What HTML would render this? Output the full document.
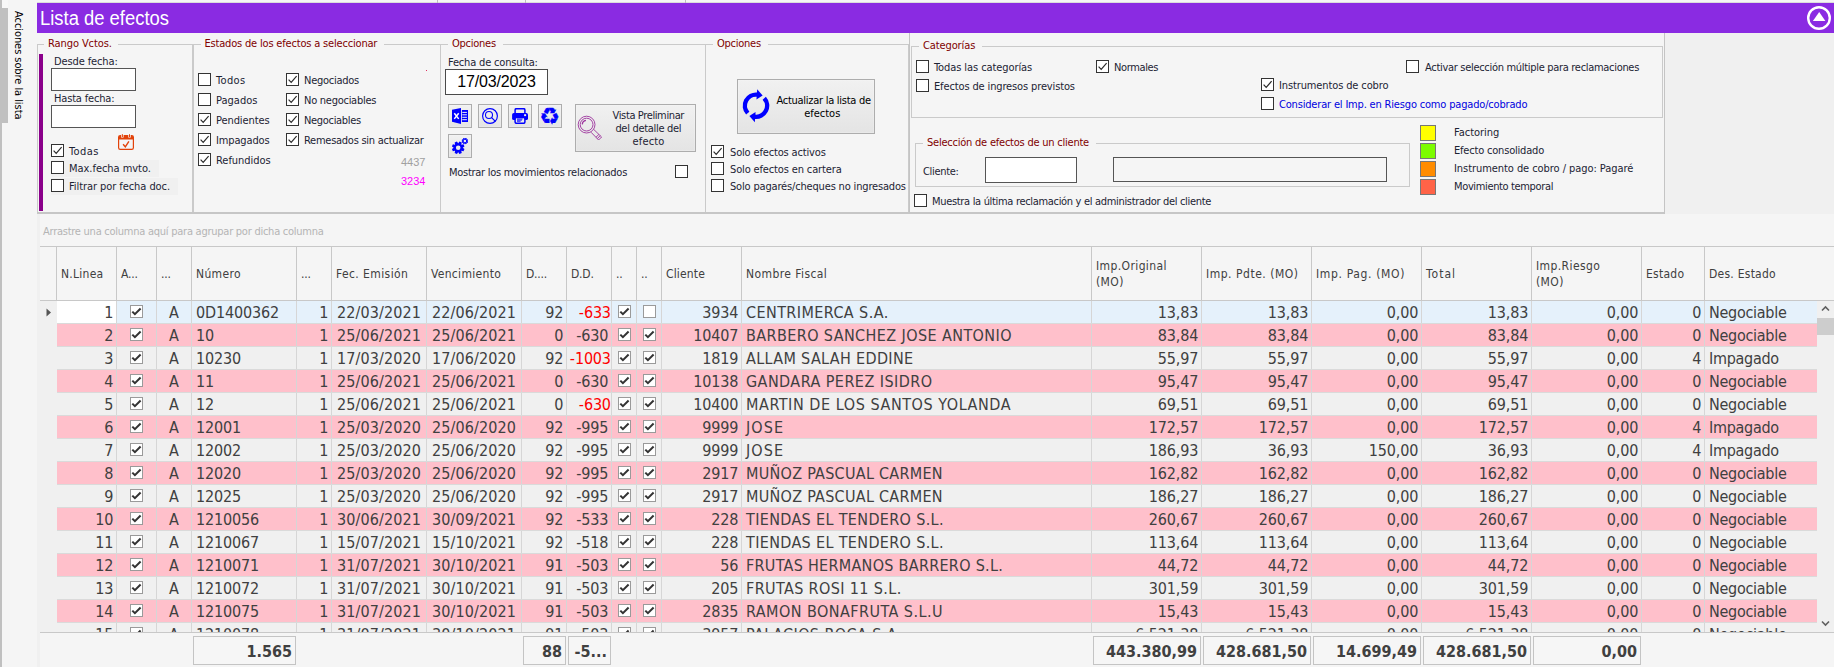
<!DOCTYPE html>
<html lang="es"><head><meta charset="utf-8"><title>Lista de efectos</title>
<style>
html,body{margin:0;padding:0;}
body{width:1834px;height:667px;overflow:hidden;background:#f5f5f5;position:relative;font-family:"DejaVu Sans Condensed","Liberation Sans",sans-serif;}
div,span{box-sizing:border-box;}
.t{position:absolute;white-space:nowrap;}
.cb{position:absolute;width:13px;height:13px;border:1px solid #333;background:#fff;}
.cb svg{position:absolute;left:-1px;top:-1px;}
.gb{position:absolute;border:1px solid #cacaca;}
.inp{position:absolute;border:1px solid #555;background:#fff;}
.btn{position:absolute;border:1px solid #adadad;background:linear-gradient(#f1f1f1,#e4e4e4);box-shadow:inset 0 0 0 1px rgba(255,255,255,0.18);}
.btn svg{position:absolute;}
.vl{position:absolute;width:1px;background:#c8c8c8;}
.hl{position:absolute;height:1px;background:#c8c8c8;}
.row{position:absolute;left:17px;width:1760px;height:22px;}
.c{position:absolute;top:2px;height:20px;line-height:20px;font-size:16px;color:#404040;white-space:nowrap;}
.r{text-align:right;}
.gcb{position:absolute;width:13px;height:13px;border:1px solid #9a9a9a;background:#fff;top:4px;}
.gcb svg{position:absolute;left:-1px;top:-1px;}
.hd{position:absolute;font-size:12px;line-height:15px;color:#404040;white-space:nowrap;}
.ft{position:absolute;top:636px;height:29px;border:1px solid #c4c4c4;background:#f6f6f6;font-weight:bold;font-size:16px;line-height:20px;padding-top:5px;text-align:right;color:#404040;white-space:nowrap;}
</style></head><body>

<div style="position:absolute;left:0;top:0;width:2px;height:667px;background:#c0c0c0"></div>
<div style="position:absolute;left:0;top:8px;width:8px;height:115px;background:#c0c0c0"></div>
<div style="position:absolute;left:2px;top:0;width:6px;height:8px;background:#f8f8f8"></div>
<div class="hl" style="left:37px;top:2px;width:1797px;background:#dcdcdc"></div>
<div class="vl" style="left:437px;top:0;height:3px;background:#bdbdbd"></div>
<div class="vl" style="left:525px;top:0;height:3px;background:#bdbdbd"></div>
<div class="vl" style="left:685px;top:0;height:3px;background:#bdbdbd"></div>
<div class="t" style="left:24.8px;top:11px;font-size:11px;line-height:14px;color:#000;transform-origin:0 0;transform:rotate(90deg);letter-spacing:-0.069px">Acciones sobre la lista</div>
<div style="position:absolute;left:37px;top:3px;width:1797px;height:30px;background:#8a2be2"></div>
<div class="t" style="left:40.2px;top:6px;font-family:'Liberation Sans',sans-serif;font-size:20px;line-height:25px;color:#fff;transform-origin:0 0;transform:scaleX(0.9208)">Lista de efectos</div>
<svg style="position:absolute;left:1806px;top:5px" width="26" height="26" viewBox="0 0 26 26"><circle cx="13" cy="13" r="10.8" fill="none" stroke="#fff" stroke-width="2.4"/><path d="M13.2 6.9 L19.4 16.1 L6.9 16.1 Z" fill="#fff"/></svg>
<div style="position:absolute;left:1665px;top:33px;width:169px;height:181px;background:#f0f0f0"></div>
<div class="hl" style="left:37px;top:212px;width:1628px;height:2px;background:#c6c6c6"></div>
<div style="position:absolute;left:37px;top:214px;width:3px;height:453px;background:#f0f0f0"></div>
<div class="vl" style="left:1664px;top:33px;height:181px;width:1px;background:#c4c4c4"></div>
<div class="vl" style="left:909px;top:33px;height:180px;width:1px;background:#c4c4c4"></div>
<div class="gb" style="left:37px;top:44px;width:156px;height:168px;border-bottom:none;"></div>
<div style="position:absolute;left:44px;top:44px;width:74px;height:1px;background:#f5f5f5"></div>
<div class="t" style="left:48px;top:37px;font-size:11px;line-height:14px;color:#800000;letter-spacing:-0.090px;">Rango Vctos.</div>
<div style="position:absolute;left:39px;top:54px;width:4px;height:157px;background:#8b008b"></div>
<div class="t" style="left:54px;top:55px;font-size:11px;line-height:14px;color:#1c2333;letter-spacing:-0.116px;">Desde fecha:</div>
<div class="inp" style="left:51px;top:68px;width:85px;height:23px"></div>
<div class="t" style="left:54px;top:92px;font-size:11px;line-height:14px;color:#1c2333;letter-spacing:-0.176px;">Hasta fecha:</div>
<div class="inp" style="left:51px;top:105px;width:85px;height:23px"></div>
<div style="position:absolute;left:51px;top:160px;width:108px;height:17px;background:#f0f0f0"></div>
<div style="position:absolute;left:51px;top:178px;width:127px;height:17px;background:#f0f0f0"></div>
<div class="cb" style="left:51px;top:144px"><svg width="13" height="13" viewBox="0 0 13 13"><path d="M2.6 6.6 L5.2 9.3 L10.6 3.2" fill="none" stroke="#2a2a2a" stroke-width="1.2"/></svg></div>
<div class="t" style="left:69px;top:145px;font-size:11px;line-height:14px;color:#1c2333;letter-spacing:0.442px;">Todas</div>
<div class="cb" style="left:51px;top:161px"></div>
<div class="t" style="left:69px;top:162px;font-size:11px;line-height:14px;color:#1c2333;letter-spacing:-0.041px;">Max.fecha mvto.</div>
<div class="cb" style="left:51px;top:179px"></div>
<div class="t" style="left:69px;top:180px;font-size:11px;line-height:14px;color:#1c2333;letter-spacing:-0.070px;">Filtrar por fecha doc.</div>
<svg style="position:absolute;left:117px;top:133px" width="18" height="18" viewBox="-1 -1 18 18">
<rect x="0.6" y="1.7" width="14.8" height="13.7" rx="1.6" fill="none" stroke="#e2420a" stroke-width="1.2"/>
<path d="M0.6 5.4 V3.2 Q0.6 1.7 2.2 1.7 H13.8 Q15.4 1.7 15.4 3.2 V5.4 Z" fill="#e2420a"/>
<rect x="3.2" y="-0.6" width="2.4" height="4.6" rx="1.2" fill="#f7fbfb"/><rect x="10.3" y="-0.6" width="2.4" height="4.6" rx="1.2" fill="#f7fbfb"/>
<rect x="3.9" y="-0.1" width="1" height="3.7" rx="0.5" fill="#e2420a"/><rect x="11" y="-0.1" width="1" height="3.7" rx="0.5" fill="#e2420a"/>
<path d="M5.1 10.3 L7.3 12.8 L10.9 7.3" fill="none" stroke="#e2420a" stroke-width="1.4"/></svg>
<div class="gb" style="left:193px;top:44px;width:248px;height:168px;border-bottom:none;"></div>
<div style="position:absolute;left:200.5px;top:44px;width:183px;height:1px;background:#f5f5f5"></div>
<div class="t" style="left:204.5px;top:37px;font-size:11px;line-height:14px;color:#800000;letter-spacing:-0.183px;">Estados de los efectos a seleccionar</div>
<div class="cb" style="left:198px;top:73px"></div>
<div class="t" style="left:216px;top:74px;font-size:11px;line-height:14px;color:#1c2333;letter-spacing:0.370px;">Todos</div>
<div class="cb" style="left:198px;top:93px"></div>
<div class="t" style="left:216px;top:94px;font-size:11px;line-height:14px;color:#1c2333;letter-spacing:0.003px;">Pagados</div>
<div class="cb" style="left:198px;top:113px"><svg width="13" height="13" viewBox="0 0 13 13"><path d="M2.6 6.6 L5.2 9.3 L10.6 3.2" fill="none" stroke="#2a2a2a" stroke-width="1.2"/></svg></div>
<div class="t" style="left:216px;top:114px;font-size:11px;line-height:14px;color:#1c2333;letter-spacing:-0.096px;">Pendientes</div>
<div class="cb" style="left:198px;top:133px"><svg width="13" height="13" viewBox="0 0 13 13"><path d="M2.6 6.6 L5.2 9.3 L10.6 3.2" fill="none" stroke="#2a2a2a" stroke-width="1.2"/></svg></div>
<div class="t" style="left:216px;top:134px;font-size:11px;line-height:14px;color:#1c2333;letter-spacing:-0.144px;">Impagados</div>
<div class="cb" style="left:198px;top:153px"><svg width="13" height="13" viewBox="0 0 13 13"><path d="M2.6 6.6 L5.2 9.3 L10.6 3.2" fill="none" stroke="#2a2a2a" stroke-width="1.2"/></svg></div>
<div class="t" style="left:216px;top:154px;font-size:11px;line-height:14px;color:#1c2333;letter-spacing:-0.048px;">Refundidos</div>
<div class="cb" style="left:286px;top:73px"><svg width="13" height="13" viewBox="0 0 13 13"><path d="M2.6 6.6 L5.2 9.3 L10.6 3.2" fill="none" stroke="#2a2a2a" stroke-width="1.2"/></svg></div>
<div class="t" style="left:304px;top:74px;font-size:11px;line-height:14px;color:#1c2333;letter-spacing:-0.264px;">Negociados</div>
<div class="cb" style="left:286px;top:93px"><svg width="13" height="13" viewBox="0 0 13 13"><path d="M2.6 6.6 L5.2 9.3 L10.6 3.2" fill="none" stroke="#2a2a2a" stroke-width="1.2"/></svg></div>
<div class="t" style="left:304px;top:94px;font-size:11px;line-height:14px;color:#1c2333;letter-spacing:-0.264px;">No negociables</div>
<div class="cb" style="left:286px;top:113px"><svg width="13" height="13" viewBox="0 0 13 13"><path d="M2.6 6.6 L5.2 9.3 L10.6 3.2" fill="none" stroke="#2a2a2a" stroke-width="1.2"/></svg></div>
<div class="t" style="left:304px;top:114px;font-size:11px;line-height:14px;color:#1c2333;letter-spacing:-0.317px;">Negociables</div>
<div class="cb" style="left:286px;top:133px"><svg width="13" height="13" viewBox="0 0 13 13"><path d="M2.6 6.6 L5.2 9.3 L10.6 3.2" fill="none" stroke="#2a2a2a" stroke-width="1.2"/></svg></div>
<div class="t" style="left:304px;top:134px;font-size:11px;line-height:14px;color:#1c2333;letter-spacing:-0.262px;">Remesados sin actualizar</div>
<div class="t" style="left:401px;top:155px;font-family:'Liberation Sans',sans-serif;font-size:11px;line-height:14px;color:#a0a0a0">4437</div>
<div class="t" style="left:401px;top:174px;font-family:'Liberation Sans',sans-serif;font-size:11px;line-height:14px;color:#ff00ff">3234</div>
<div style="position:absolute;left:426px;top:70px;width:1px;height:1px;background:#e03060"></div>
<div class="gb" style="left:440px;top:44px;width:266px;height:168px;border-bottom:none;"></div>
<div style="position:absolute;left:448px;top:44px;width:55px;height:1px;background:#f5f5f5"></div>
<div class="t" style="left:452px;top:37px;font-size:11px;line-height:14px;color:#800000;letter-spacing:-0.248px;">Opciones</div>
<div class="t" style="left:448px;top:56px;font-size:11px;line-height:14px;color:#1c2333;letter-spacing:-0.173px;">Fecha de consulta:</div>
<div class="inp" style="left:445px;top:69px;width:103px;height:26px;border-color:#4a4a4a;font-family:'Liberation Sans',sans-serif;font-size:16px;line-height:20px;padding-top:2px;padding-left:-0.15px;text-align:center;color:#000;letter-spacing:-0.153px">17/03/2023</div>
<div class="btn" style="left:448px;top:104px;width:24px;height:24px"><svg style="left:3px;top:3px" width="16" height="16" viewBox="0 0 16 16">
<path d="M0 1.8 L9 0 V16 L0 13.7 Z" fill="#0000ff"/>
<rect x="9.9" y="2" width="6.1" height="12" fill="#0000ff"/>
<path d="M10.3 4.4 H14.9 M10.3 6.8 H14.9 M10.3 9.3 H14.9 M10.3 11.7 H14.9" stroke="#f0f0ff" stroke-width="1"/>
<path d="M2.3 5.3 L6.7 10.9 M6.7 5.3 L2.3 10.9" stroke="#fff" stroke-width="1.5"/></svg></div>
<div class="btn" style="left:478px;top:104px;width:24px;height:24px"><svg style="left:3px;top:3px" width="16" height="16" viewBox="0 0 16 16">
<circle cx="8" cy="8" r="7.4" fill="none" stroke="#0000ff" stroke-width="1.15"/>
<circle cx="7" cy="7" r="3.5" fill="none" stroke="#0000ff" stroke-width="1.05"/>
<path d="M9.6 9.6 L13.4 13.4" stroke="#0000ff" stroke-width="1.2"/></svg></div>
<div class="btn" style="left:508px;top:104px;width:24px;height:24px"><svg style="left:3px;top:3px" width="16" height="16" viewBox="0 0 16 16">
<rect x="3.1" y="0.7" width="9.8" height="5.5" rx="1.2" fill="none" stroke="#0000ff" stroke-width="1.5"/>
<rect x="0.1" y="5" width="15.9" height="7.1" rx="1.7" fill="#0000ff"/>
<rect x="12.1" y="6.2" width="2" height="1.9" fill="#eee"/>
<rect x="3.1" y="9.6" width="9.8" height="5.7" rx="1.2" fill="#ececec" stroke="#0000ff" stroke-width="1.5"/>
<path d="M5 10.9 H10.7 M5 12.2 H10 M5 13.4 H8.6" stroke="#5050ff" stroke-width="1.2"/></svg></div>
<div class="btn" style="left:538px;top:104px;width:24px;height:24px"><div style="position:absolute;left:-2.5px;top:-4px;width:26px;text-align:center;font-family:'DejaVu Sans',sans-serif;font-size:23px;line-height:30px;-webkit-text-stroke:0.4px #00f;color:#0000ff">&#9851;</div></div>
<div class="btn" style="left:448px;top:134px;width:24px;height:24px"><svg style="left:3px;top:3px" width="16" height="16" viewBox="0 0 16 16"><path d="M10.70 9.84 L12.48 11.00 L11.52 13.31 L9.44 12.87 L9.32 12.99 L9.76 15.07 L7.45 16.03 L6.29 14.25 L6.11 14.25 L4.95 16.03 L2.64 15.07 L3.08 12.99 L2.96 12.87 L0.88 13.31 L-0.08 11.00 L1.70 9.84 L1.70 9.66 L-0.08 8.50 L0.88 6.19 L2.96 6.63 L3.08 6.51 L2.64 4.43 L4.95 3.47 L6.11 5.25 L6.29 5.25 L7.45 3.47 L9.76 4.43 L9.32 6.51 L9.44 6.63 L11.52 6.19 L12.48 8.50 L10.70 9.66 Z M3.90 9.75 a2.3 2.3 0 1 0 4.6 0 a2.3 2.3 0 1 0 -4.6 0 Z" fill="#0000ff" fill-rule="evenodd"/><path d="M15.15 3.09 L16.19 3.70 L15.69 4.91 L14.52 4.61 L14.46 4.67 L14.76 5.84 L13.55 6.34 L12.94 5.30 L12.86 5.30 L12.25 6.34 L11.04 5.84 L11.34 4.67 L11.28 4.61 L10.11 4.91 L9.61 3.70 L10.65 3.09 L10.65 3.01 L9.61 2.40 L10.11 1.19 L11.28 1.49 L11.34 1.43 L11.04 0.26 L12.25 -0.24 L12.86 0.80 L12.94 0.80 L13.55 -0.24 L14.76 0.26 L14.46 1.43 L14.52 1.49 L15.69 1.19 L16.19 2.40 L15.15 3.01 Z M11.65 3.05 a1.25 1.25 0 1 0 2.5 0 a1.25 1.25 0 1 0 -2.5 0 Z" fill="#0000ff" fill-rule="evenodd"/></svg></div>
<div class="btn" style="left:575px;top:104px;width:121px;height:48px"><svg style="left:0px;top:7px" width="30" height="30" viewBox="576 112 30 30">
<circle cx="586.6" cy="124.6" r="8.4" fill="none" stroke="#9c329c" stroke-width="0.9"/>
<circle cx="586.6" cy="124.6" r="6.4" fill="none" stroke="#9c329c" stroke-width="0.9"/>
<path d="M582.3 124.4 A4.4 4.4 0 0 1 585.9 120.4" fill="none" stroke="#9c329c" stroke-width="1.3"/>
<path d="M593.6 129.3 L601.6 137.0 L598.6 140.0 L591.0 132.2 M598.9 134.4 L595.9 137.3 M600.2 135.7 L597.3 138.6" fill="none" stroke="#9c329c" stroke-width="0.9"/></svg></div>
<div class="t" style="left:612.6px;top:109px;font-size:11px;line-height:14px;color:#1c2333;letter-spacing:-0.380px;">Vista Preliminar</div>
<div class="t" style="left:615.4px;top:122px;font-size:11px;line-height:14px;color:#1c2333;letter-spacing:-0.303px;">del detalle del</div>
<div class="t" style="left:632.6px;top:135px;font-size:11px;line-height:14px;color:#1c2333;letter-spacing:0.153px;">efecto</div>
<div class="t" style="left:449px;top:166px;font-size:11px;line-height:14px;color:#1c2333;letter-spacing:-0.282px;">Mostrar los movimientos relacionados</div>
<div class="cb" style="left:675px;top:165px"></div>
<div class="gb" style="left:705px;top:44px;width:204px;height:168px;border-bottom:none;"></div>
<div style="position:absolute;left:713px;top:44px;width:55px;height:1px;background:#f5f5f5"></div>
<div class="t" style="left:717px;top:37px;font-size:11px;line-height:14px;color:#800000;letter-spacing:-0.248px;">Opciones</div>
<div class="btn" style="left:737px;top:79px;width:138px;height:55px"><svg style="left:0;top:0" width="40" height="53" viewBox="738 80 40 53"><g transform="rotate(0 756.0 105.7)"><path d="M747.75 113.13 A11.1 11.1 0 0 1 757.35 94.68" fill="none" stroke="#0000ff" stroke-width="4.4"/><path d="M756.44 99.42 L757.16 89.14 L762.64 95.47 Z" fill="#0000ff"/></g><g transform="rotate(180 756.0 105.7)"><path d="M747.75 113.13 A11.1 11.1 0 0 1 757.35 94.68" fill="none" stroke="#0000ff" stroke-width="4.4"/><path d="M756.44 99.42 L757.16 89.14 L762.64 95.47 Z" fill="#0000ff"/></g></svg></div>
<div class="t" style="left:776.5px;top:94px;font-size:11px;line-height:14px;color:#000;letter-spacing:-0.275px;">Actualizar la lista de</div>
<div class="t" style="left:804.2px;top:107px;font-size:11px;line-height:14px;color:#000;letter-spacing:-0.015px;">efectos</div>
<div class="cb" style="left:711px;top:145px"><svg width="13" height="13" viewBox="0 0 13 13"><path d="M2.6 6.6 L5.2 9.3 L10.6 3.2" fill="none" stroke="#2a2a2a" stroke-width="1.2"/></svg></div>
<div class="t" style="left:730px;top:146px;font-size:11px;line-height:14px;color:#1c2333;letter-spacing:-0.159px;">Solo efectos activos</div>
<div class="cb" style="left:711px;top:162px"></div>
<div class="t" style="left:730px;top:163px;font-size:11px;line-height:14px;color:#1c2333;letter-spacing:-0.141px;">Solo efectos en cartera</div>
<div class="cb" style="left:711px;top:179px"></div>
<div class="t" style="left:730px;top:180px;font-size:11px;line-height:14px;color:#1c2333;letter-spacing:-0.168px;">Solo pagarés/cheques no ingresados</div>
<div class="gb" style="left:911px;top:46px;width:752px;height:72px;"></div>
<div style="position:absolute;left:919px;top:46px;width:63px;height:1px;background:#f5f5f5"></div>
<div class="t" style="left:923px;top:39px;font-size:11px;line-height:14px;color:#800000;letter-spacing:-0.113px;">Categorías</div>
<div class="cb" style="left:916px;top:60px"></div>
<div class="t" style="left:934px;top:61px;font-size:11px;line-height:14px;color:#1c2333;letter-spacing:-0.086px;">Todas las categorías</div>
<div class="cb" style="left:916px;top:79px"></div>
<div class="t" style="left:934px;top:80px;font-size:11px;line-height:14px;color:#1c2333;letter-spacing:-0.135px;">Efectos de ingresos previstos</div>
<div class="cb" style="left:1096px;top:60px"><svg width="13" height="13" viewBox="0 0 13 13"><path d="M2.6 6.6 L5.2 9.3 L10.6 3.2" fill="none" stroke="#2a2a2a" stroke-width="1.2"/></svg></div>
<div class="t" style="left:1114px;top:61px;font-size:11px;line-height:14px;color:#1c2333;letter-spacing:-0.376px;">Normales</div>
<div class="cb" style="left:1406px;top:60px"></div>
<div class="t" style="left:1425px;top:61px;font-size:11px;line-height:14px;color:#1c2333;letter-spacing:-0.306px;">Activar selección múltiple para reclamaciones</div>
<div class="cb" style="left:1261px;top:78px"><svg width="13" height="13" viewBox="0 0 13 13"><path d="M2.6 6.6 L5.2 9.3 L10.6 3.2" fill="none" stroke="#2a2a2a" stroke-width="1.2"/></svg></div>
<div class="t" style="left:1279px;top:79px;font-size:11px;line-height:14px;color:#1c2333;letter-spacing:-0.124px;">Instrumentos de cobro</div>
<div class="cb" style="left:1261px;top:97px"></div>
<div class="t" style="left:1279px;top:98px;font-size:11px;line-height:14px;color:#0000e0;letter-spacing:-0.176px;">Considerar el Imp. en Riesgo como pagado/cobrado</div>
<div class="gb" style="left:915px;top:143px;width:495px;height:44px;"></div>
<div style="position:absolute;left:923px;top:143px;width:173px;height:1px;background:#f5f5f5"></div>
<div class="t" style="left:927px;top:136px;font-size:11px;line-height:14px;color:#800000;letter-spacing:-0.226px;">Selección de efectos de un cliente</div>
<div class="t" style="left:923px;top:165px;font-size:11px;line-height:14px;color:#1c2333;letter-spacing:-0.326px;">Cliente:</div>
<div class="inp" style="left:985px;top:157px;width:92px;height:26px"></div>
<div class="inp" style="left:1113px;top:157px;width:274px;height:25px;background:#f5f5f5"></div>
<div class="cb" style="left:914px;top:194px"></div>
<div class="t" style="left:932px;top:195px;font-size:11px;line-height:14px;color:#1c2333;letter-spacing:-0.320px;">Muestra la última reclamación y el administrador del cliente</div>
<div style="position:absolute;left:1420px;top:125px;width:16px;height:16px;background:#ffff00;border:1px solid #777"></div>
<div class="t" style="left:1454px;top:126px;font-size:11px;line-height:14px;color:#1c2333;letter-spacing:-0.012px;">Factoring</div>
<div style="position:absolute;left:1420px;top:143px;width:16px;height:16px;background:#7cfc00;border:1px solid #777"></div>
<div class="t" style="left:1454px;top:144px;font-size:11px;line-height:14px;color:#1c2333;letter-spacing:-0.194px;">Efecto consolidado</div>
<div style="position:absolute;left:1420px;top:161px;width:16px;height:16px;background:#ff8c00;border:1px solid #777"></div>
<div class="t" style="left:1454px;top:162px;font-size:11px;line-height:14px;color:#1c2333;letter-spacing:-0.062px;">Instrumento de cobro / pago: Pagaré</div>
<div style="position:absolute;left:1420px;top:179px;width:16px;height:16px;background:#ff6347;border:1px solid #777"></div>
<div class="t" style="left:1454px;top:180px;font-size:11px;line-height:14px;color:#1c2333;letter-spacing:-0.359px;">Movimiento temporal</div>
<div class="t" style="left:43px;top:225px;font-size:11px;line-height:14px;color:#b4b4b4;letter-spacing:-0.251px;">Arrastre una columna aquí para agrupar por dicha columna</div>
<div class="hl" style="left:40px;top:246px;width:1794px"></div>
<div class="hl" style="left:40px;top:300px;width:1794px"></div>
<div class="vl" style="left:56px;top:247px;height:385px"></div>
<div class="vl" style="left:116px;top:247px;height:54px"></div>
<div class="vl" style="left:156px;top:247px;height:54px"></div>
<div class="vl" style="left:191px;top:247px;height:54px"></div>
<div class="vl" style="left:296px;top:247px;height:54px"></div>
<div class="vl" style="left:331px;top:247px;height:54px"></div>
<div class="vl" style="left:426px;top:247px;height:54px"></div>
<div class="vl" style="left:521px;top:247px;height:54px"></div>
<div class="vl" style="left:566px;top:247px;height:54px"></div>
<div class="vl" style="left:611px;top:247px;height:54px"></div>
<div class="vl" style="left:636px;top:247px;height:54px"></div>
<div class="vl" style="left:661px;top:247px;height:54px"></div>
<div class="vl" style="left:741px;top:247px;height:54px"></div>
<div class="vl" style="left:1091px;top:247px;height:54px"></div>
<div class="vl" style="left:1201px;top:247px;height:54px"></div>
<div class="vl" style="left:1311px;top:247px;height:54px"></div>
<div class="vl" style="left:1421px;top:247px;height:54px"></div>
<div class="vl" style="left:1531px;top:247px;height:54px"></div>
<div class="vl" style="left:1641px;top:247px;height:54px"></div>
<div class="vl" style="left:1704px;top:247px;height:54px"></div>
<div class="hd" style="left:61px;top:267px;letter-spacing:0.264px">N.Linea</div>
<div class="hd" style="left:121px;top:267px;letter-spacing:-0.200px">A...</div>
<div class="hd" style="left:161px;top:267px;letter-spacing:-0.200px">...</div>
<div class="hd" style="left:196px;top:267px;letter-spacing:0.349px">Número</div>
<div class="hd" style="left:301px;top:267px;letter-spacing:-0.200px">...</div>
<div class="hd" style="left:336px;top:267px;letter-spacing:0.409px">Fec. Emisión</div>
<div class="hd" style="left:431px;top:267px;letter-spacing:0.308px">Vencimiento</div>
<div class="hd" style="left:526px;top:267px;letter-spacing:-0.200px">D....</div>
<div class="hd" style="left:571px;top:267px;letter-spacing:-0.200px">D.D.</div>
<div class="hd" style="left:616px;top:267px;letter-spacing:-0.200px">..</div>
<div class="hd" style="left:641px;top:267px;letter-spacing:-0.200px">..</div>
<div class="hd" style="left:666px;top:267px;letter-spacing:0.149px">Cliente</div>
<div class="hd" style="left:746px;top:267px;letter-spacing:0.416px">Nombre Fiscal</div>
<div class="hd" style="left:1096px;top:258px;letter-spacing:0.388px;line-height:16px">Imp.Original<br>(MO)</div>
<div class="hd" style="left:1206px;top:267px;letter-spacing:0.518px">Imp. Pdte. (MO)</div>
<div class="hd" style="left:1316px;top:267px;letter-spacing:0.650px">Imp. Pag. (MO)</div>
<div class="hd" style="left:1426px;top:267px;letter-spacing:1.024px">Total</div>
<div class="hd" style="left:1536px;top:258px;letter-spacing:0.410px;line-height:16px">Imp.Riesgo<br>(MO)</div>
<div class="hd" style="left:1646px;top:267px;letter-spacing:0.270px">Estado</div>
<div class="hd" style="left:1709px;top:267px;letter-spacing:0.251px">Des. Estado</div>
<div style="position:absolute;left:40px;top:301px;width:1777px;height:331px;overflow:hidden;background:#f0f0f0">
<div class="row" style="top:0px;background:#e5f1fb">
<div style="position:absolute;left:0;top:0;width:59px;height:22px;background:#fff"></div>
<div class="c r" style="left:0px;width:59px;letter-spacing:-0.16px;padding-right:2.84px;">1</div>
<div class="gcb" style="left:73px"><svg width="13" height="13" viewBox="0 0 13 13"><path d="M2.3 6.6 L4.9 9.2 L10.6 3.5" fill="none" stroke="#333" stroke-width="2"/></svg></div>
<div class="c" style="left:100px;width:34px;text-align:center">A</div>
<div class="c" style="left:135px;width:104px;letter-spacing:-0.16px;padding-left:4px;">0D1400362</div>
<div class="c r" style="left:240px;width:34px;letter-spacing:-0.16px;padding-right:2.84px;">1</div>
<div class="c" style="left:275px;width:94px;letter-spacing:0.1px;padding-left:5px;">22/03/2021</div>
<div class="c" style="left:370px;width:94px;letter-spacing:0.1px;padding-left:5px;">22/06/2021</div>
<div class="c r" style="left:465px;width:44px;letter-spacing:-0.16px;padding-right:2.84px;">92</div>
<div class="c r" style="left:510px;width:44px;letter-spacing:-0.16px;padding-right:0.14px;color:#ff0000;">-633</div>
<div class="gcb" style="left:561px"><svg width="13" height="13" viewBox="0 0 13 13"><path d="M2.3 6.6 L4.9 9.2 L10.6 3.5" fill="none" stroke="#333" stroke-width="2"/></svg></div>
<div class="gcb" style="left:586px"></div>
<div class="c r" style="left:605px;width:79px;letter-spacing:-0.16px;padding-right:2.84px;">3934</div>
<div class="c" style="left:685px;width:349px;letter-spacing:0.415px;padding-left:4px;">CENTRIMERCA S.A.</div>
<div class="c r" style="left:1035px;width:109px;letter-spacing:-0.16px;padding-right:2.84px;">13,83</div>
<div class="c r" style="left:1145px;width:109px;letter-spacing:-0.16px;padding-right:2.84px;">13,83</div>
<div class="c r" style="left:1255px;width:109px;letter-spacing:-0.16px;padding-right:2.84px;">0,00</div>
<div class="c r" style="left:1365px;width:109px;letter-spacing:-0.16px;padding-right:2.84px;">13,83</div>
<div class="c r" style="left:1475px;width:109px;letter-spacing:-0.16px;padding-right:2.84px;">0,00</div>
<div class="c r" style="left:1585px;width:62px;letter-spacing:-0.16px;padding-right:2.84px;">0</div>
<div class="c" style="left:1648px;width:129px;letter-spacing:-0.28px;padding-left:4px;">Negociable</div>
</div>
<div class="row" style="top:23px;background:#ffc0cb">
<div class="c r" style="left:0px;width:59px;letter-spacing:-0.16px;padding-right:2.84px;">2</div>
<div class="gcb" style="left:73px"><svg width="13" height="13" viewBox="0 0 13 13"><path d="M2.3 6.6 L4.9 9.2 L10.6 3.5" fill="none" stroke="#333" stroke-width="2"/></svg></div>
<div class="c" style="left:100px;width:34px;text-align:center">A</div>
<div class="c" style="left:135px;width:104px;letter-spacing:-0.16px;padding-left:4px;">10</div>
<div class="c r" style="left:240px;width:34px;letter-spacing:-0.16px;padding-right:2.84px;">1</div>
<div class="c" style="left:275px;width:94px;letter-spacing:0.1px;padding-left:5px;">25/06/2021</div>
<div class="c" style="left:370px;width:94px;letter-spacing:0.1px;padding-left:5px;">25/06/2021</div>
<div class="c r" style="left:465px;width:44px;letter-spacing:-0.16px;padding-right:2.84px;">0</div>
<div class="c r" style="left:510px;width:44px;letter-spacing:-0.16px;padding-right:2.84px;">-630</div>
<div class="gcb" style="left:561px"><svg width="13" height="13" viewBox="0 0 13 13"><path d="M2.3 6.6 L4.9 9.2 L10.6 3.5" fill="none" stroke="#333" stroke-width="2"/></svg></div>
<div class="gcb" style="left:586px"><svg width="13" height="13" viewBox="0 0 13 13"><path d="M2.3 6.6 L4.9 9.2 L10.6 3.5" fill="none" stroke="#333" stroke-width="2"/></svg></div>
<div class="c r" style="left:605px;width:79px;letter-spacing:-0.16px;padding-right:2.84px;">10407</div>
<div class="c" style="left:685px;width:349px;letter-spacing:0.408px;padding-left:4px;">BARBERO SANCHEZ JOSE ANTONIO</div>
<div class="c r" style="left:1035px;width:109px;letter-spacing:-0.16px;padding-right:2.84px;">83,84</div>
<div class="c r" style="left:1145px;width:109px;letter-spacing:-0.16px;padding-right:2.84px;">83,84</div>
<div class="c r" style="left:1255px;width:109px;letter-spacing:-0.16px;padding-right:2.84px;">0,00</div>
<div class="c r" style="left:1365px;width:109px;letter-spacing:-0.16px;padding-right:2.84px;">83,84</div>
<div class="c r" style="left:1475px;width:109px;letter-spacing:-0.16px;padding-right:2.84px;">0,00</div>
<div class="c r" style="left:1585px;width:62px;letter-spacing:-0.16px;padding-right:2.84px;">0</div>
<div class="c" style="left:1648px;width:129px;letter-spacing:-0.28px;padding-left:4px;">Negociable</div>
</div>
<div class="row" style="top:46px;background:#f0f0f0">
<div class="c r" style="left:0px;width:59px;letter-spacing:-0.16px;padding-right:2.84px;">3</div>
<div class="gcb" style="left:73px"><svg width="13" height="13" viewBox="0 0 13 13"><path d="M2.3 6.6 L4.9 9.2 L10.6 3.5" fill="none" stroke="#333" stroke-width="2"/></svg></div>
<div class="c" style="left:100px;width:34px;text-align:center">A</div>
<div class="c" style="left:135px;width:104px;letter-spacing:-0.16px;padding-left:4px;">10230</div>
<div class="c r" style="left:240px;width:34px;letter-spacing:-0.16px;padding-right:2.84px;">1</div>
<div class="c" style="left:275px;width:94px;letter-spacing:0.1px;padding-left:5px;">17/03/2020</div>
<div class="c" style="left:370px;width:94px;letter-spacing:0.1px;padding-left:5px;">17/06/2020</div>
<div class="c r" style="left:465px;width:44px;letter-spacing:-0.16px;padding-right:2.84px;">92</div>
<div class="c r" style="left:510px;width:44px;letter-spacing:-0.16px;padding-right:0.14px;color:#ff0000;">-1003</div>
<div class="gcb" style="left:561px"><svg width="13" height="13" viewBox="0 0 13 13"><path d="M2.3 6.6 L4.9 9.2 L10.6 3.5" fill="none" stroke="#333" stroke-width="2"/></svg></div>
<div class="gcb" style="left:586px"><svg width="13" height="13" viewBox="0 0 13 13"><path d="M2.3 6.6 L4.9 9.2 L10.6 3.5" fill="none" stroke="#333" stroke-width="2"/></svg></div>
<div class="c r" style="left:605px;width:79px;letter-spacing:-0.16px;padding-right:2.84px;">1819</div>
<div class="c" style="left:685px;width:349px;letter-spacing:0.338px;padding-left:4px;">ALLAM SALAH EDDINE</div>
<div class="c r" style="left:1035px;width:109px;letter-spacing:-0.16px;padding-right:2.84px;">55,97</div>
<div class="c r" style="left:1145px;width:109px;letter-spacing:-0.16px;padding-right:2.84px;">55,97</div>
<div class="c r" style="left:1255px;width:109px;letter-spacing:-0.16px;padding-right:2.84px;">0,00</div>
<div class="c r" style="left:1365px;width:109px;letter-spacing:-0.16px;padding-right:2.84px;">55,97</div>
<div class="c r" style="left:1475px;width:109px;letter-spacing:-0.16px;padding-right:2.84px;">0,00</div>
<div class="c r" style="left:1585px;width:62px;letter-spacing:-0.16px;padding-right:2.84px;">4</div>
<div class="c" style="left:1648px;width:129px;letter-spacing:-0.28px;padding-left:4px;">Impagado</div>
</div>
<div class="row" style="top:69px;background:#ffc0cb">
<div class="c r" style="left:0px;width:59px;letter-spacing:-0.16px;padding-right:2.84px;">4</div>
<div class="gcb" style="left:73px"><svg width="13" height="13" viewBox="0 0 13 13"><path d="M2.3 6.6 L4.9 9.2 L10.6 3.5" fill="none" stroke="#333" stroke-width="2"/></svg></div>
<div class="c" style="left:100px;width:34px;text-align:center">A</div>
<div class="c" style="left:135px;width:104px;letter-spacing:-0.16px;padding-left:4px;">11</div>
<div class="c r" style="left:240px;width:34px;letter-spacing:-0.16px;padding-right:2.84px;">1</div>
<div class="c" style="left:275px;width:94px;letter-spacing:0.1px;padding-left:5px;">25/06/2021</div>
<div class="c" style="left:370px;width:94px;letter-spacing:0.1px;padding-left:5px;">25/06/2021</div>
<div class="c r" style="left:465px;width:44px;letter-spacing:-0.16px;padding-right:2.84px;">0</div>
<div class="c r" style="left:510px;width:44px;letter-spacing:-0.16px;padding-right:2.84px;">-630</div>
<div class="gcb" style="left:561px"><svg width="13" height="13" viewBox="0 0 13 13"><path d="M2.3 6.6 L4.9 9.2 L10.6 3.5" fill="none" stroke="#333" stroke-width="2"/></svg></div>
<div class="gcb" style="left:586px"><svg width="13" height="13" viewBox="0 0 13 13"><path d="M2.3 6.6 L4.9 9.2 L10.6 3.5" fill="none" stroke="#333" stroke-width="2"/></svg></div>
<div class="c r" style="left:605px;width:79px;letter-spacing:-0.16px;padding-right:2.84px;">10138</div>
<div class="c" style="left:685px;width:349px;letter-spacing:0.446px;padding-left:4px;">GANDARA PEREZ ISIDRO</div>
<div class="c r" style="left:1035px;width:109px;letter-spacing:-0.16px;padding-right:2.84px;">95,47</div>
<div class="c r" style="left:1145px;width:109px;letter-spacing:-0.16px;padding-right:2.84px;">95,47</div>
<div class="c r" style="left:1255px;width:109px;letter-spacing:-0.16px;padding-right:2.84px;">0,00</div>
<div class="c r" style="left:1365px;width:109px;letter-spacing:-0.16px;padding-right:2.84px;">95,47</div>
<div class="c r" style="left:1475px;width:109px;letter-spacing:-0.16px;padding-right:2.84px;">0,00</div>
<div class="c r" style="left:1585px;width:62px;letter-spacing:-0.16px;padding-right:2.84px;">0</div>
<div class="c" style="left:1648px;width:129px;letter-spacing:-0.28px;padding-left:4px;">Negociable</div>
</div>
<div class="row" style="top:92px;background:#f0f0f0">
<div class="c r" style="left:0px;width:59px;letter-spacing:-0.16px;padding-right:2.84px;">5</div>
<div class="gcb" style="left:73px"><svg width="13" height="13" viewBox="0 0 13 13"><path d="M2.3 6.6 L4.9 9.2 L10.6 3.5" fill="none" stroke="#333" stroke-width="2"/></svg></div>
<div class="c" style="left:100px;width:34px;text-align:center">A</div>
<div class="c" style="left:135px;width:104px;letter-spacing:-0.16px;padding-left:4px;">12</div>
<div class="c r" style="left:240px;width:34px;letter-spacing:-0.16px;padding-right:2.84px;">1</div>
<div class="c" style="left:275px;width:94px;letter-spacing:0.1px;padding-left:5px;">25/06/2021</div>
<div class="c" style="left:370px;width:94px;letter-spacing:0.1px;padding-left:5px;">25/06/2021</div>
<div class="c r" style="left:465px;width:44px;letter-spacing:-0.16px;padding-right:2.84px;">0</div>
<div class="c r" style="left:510px;width:44px;letter-spacing:-0.16px;padding-right:0.14px;color:#ff0000;">-630</div>
<div class="gcb" style="left:561px"><svg width="13" height="13" viewBox="0 0 13 13"><path d="M2.3 6.6 L4.9 9.2 L10.6 3.5" fill="none" stroke="#333" stroke-width="2"/></svg></div>
<div class="gcb" style="left:586px"><svg width="13" height="13" viewBox="0 0 13 13"><path d="M2.3 6.6 L4.9 9.2 L10.6 3.5" fill="none" stroke="#333" stroke-width="2"/></svg></div>
<div class="c r" style="left:605px;width:79px;letter-spacing:-0.16px;padding-right:2.84px;">10400</div>
<div class="c" style="left:685px;width:349px;letter-spacing:0.557px;padding-left:4px;">MARTIN DE LOS SANTOS YOLANDA</div>
<div class="c r" style="left:1035px;width:109px;letter-spacing:-0.16px;padding-right:2.84px;">69,51</div>
<div class="c r" style="left:1145px;width:109px;letter-spacing:-0.16px;padding-right:2.84px;">69,51</div>
<div class="c r" style="left:1255px;width:109px;letter-spacing:-0.16px;padding-right:2.84px;">0,00</div>
<div class="c r" style="left:1365px;width:109px;letter-spacing:-0.16px;padding-right:2.84px;">69,51</div>
<div class="c r" style="left:1475px;width:109px;letter-spacing:-0.16px;padding-right:2.84px;">0,00</div>
<div class="c r" style="left:1585px;width:62px;letter-spacing:-0.16px;padding-right:2.84px;">0</div>
<div class="c" style="left:1648px;width:129px;letter-spacing:-0.28px;padding-left:4px;">Negociable</div>
</div>
<div class="row" style="top:115px;background:#ffc0cb">
<div class="c r" style="left:0px;width:59px;letter-spacing:-0.16px;padding-right:2.84px;">6</div>
<div class="gcb" style="left:73px"><svg width="13" height="13" viewBox="0 0 13 13"><path d="M2.3 6.6 L4.9 9.2 L10.6 3.5" fill="none" stroke="#333" stroke-width="2"/></svg></div>
<div class="c" style="left:100px;width:34px;text-align:center">A</div>
<div class="c" style="left:135px;width:104px;letter-spacing:-0.16px;padding-left:4px;">12001</div>
<div class="c r" style="left:240px;width:34px;letter-spacing:-0.16px;padding-right:2.84px;">1</div>
<div class="c" style="left:275px;width:94px;letter-spacing:0.1px;padding-left:5px;">25/03/2020</div>
<div class="c" style="left:370px;width:94px;letter-spacing:0.1px;padding-left:5px;">25/06/2020</div>
<div class="c r" style="left:465px;width:44px;letter-spacing:-0.16px;padding-right:2.84px;">92</div>
<div class="c r" style="left:510px;width:44px;letter-spacing:-0.16px;padding-right:2.84px;">-995</div>
<div class="gcb" style="left:561px"><svg width="13" height="13" viewBox="0 0 13 13"><path d="M2.3 6.6 L4.9 9.2 L10.6 3.5" fill="none" stroke="#333" stroke-width="2"/></svg></div>
<div class="gcb" style="left:586px"><svg width="13" height="13" viewBox="0 0 13 13"><path d="M2.3 6.6 L4.9 9.2 L10.6 3.5" fill="none" stroke="#333" stroke-width="2"/></svg></div>
<div class="c r" style="left:605px;width:79px;letter-spacing:-0.16px;padding-right:2.84px;">9999</div>
<div class="c" style="left:685px;width:349px;letter-spacing:1.065px;padding-left:4px;">JOSE</div>
<div class="c r" style="left:1035px;width:109px;letter-spacing:-0.16px;padding-right:2.84px;">172,57</div>
<div class="c r" style="left:1145px;width:109px;letter-spacing:-0.16px;padding-right:2.84px;">172,57</div>
<div class="c r" style="left:1255px;width:109px;letter-spacing:-0.16px;padding-right:2.84px;">0,00</div>
<div class="c r" style="left:1365px;width:109px;letter-spacing:-0.16px;padding-right:2.84px;">172,57</div>
<div class="c r" style="left:1475px;width:109px;letter-spacing:-0.16px;padding-right:2.84px;">0,00</div>
<div class="c r" style="left:1585px;width:62px;letter-spacing:-0.16px;padding-right:2.84px;">4</div>
<div class="c" style="left:1648px;width:129px;letter-spacing:-0.28px;padding-left:4px;">Impagado</div>
</div>
<div class="row" style="top:138px;background:#f0f0f0">
<div class="c r" style="left:0px;width:59px;letter-spacing:-0.16px;padding-right:2.84px;">7</div>
<div class="gcb" style="left:73px"><svg width="13" height="13" viewBox="0 0 13 13"><path d="M2.3 6.6 L4.9 9.2 L10.6 3.5" fill="none" stroke="#333" stroke-width="2"/></svg></div>
<div class="c" style="left:100px;width:34px;text-align:center">A</div>
<div class="c" style="left:135px;width:104px;letter-spacing:-0.16px;padding-left:4px;">12002</div>
<div class="c r" style="left:240px;width:34px;letter-spacing:-0.16px;padding-right:2.84px;">1</div>
<div class="c" style="left:275px;width:94px;letter-spacing:0.1px;padding-left:5px;">25/03/2020</div>
<div class="c" style="left:370px;width:94px;letter-spacing:0.1px;padding-left:5px;">25/06/2020</div>
<div class="c r" style="left:465px;width:44px;letter-spacing:-0.16px;padding-right:2.84px;">92</div>
<div class="c r" style="left:510px;width:44px;letter-spacing:-0.16px;padding-right:2.84px;">-995</div>
<div class="gcb" style="left:561px"><svg width="13" height="13" viewBox="0 0 13 13"><path d="M2.3 6.6 L4.9 9.2 L10.6 3.5" fill="none" stroke="#333" stroke-width="2"/></svg></div>
<div class="gcb" style="left:586px"><svg width="13" height="13" viewBox="0 0 13 13"><path d="M2.3 6.6 L4.9 9.2 L10.6 3.5" fill="none" stroke="#333" stroke-width="2"/></svg></div>
<div class="c r" style="left:605px;width:79px;letter-spacing:-0.16px;padding-right:2.84px;">9999</div>
<div class="c" style="left:685px;width:349px;letter-spacing:1.065px;padding-left:4px;">JOSE</div>
<div class="c r" style="left:1035px;width:109px;letter-spacing:-0.16px;padding-right:2.84px;">186,93</div>
<div class="c r" style="left:1145px;width:109px;letter-spacing:-0.16px;padding-right:2.84px;">36,93</div>
<div class="c r" style="left:1255px;width:109px;letter-spacing:-0.16px;padding-right:2.84px;">150,00</div>
<div class="c r" style="left:1365px;width:109px;letter-spacing:-0.16px;padding-right:2.84px;">36,93</div>
<div class="c r" style="left:1475px;width:109px;letter-spacing:-0.16px;padding-right:2.84px;">0,00</div>
<div class="c r" style="left:1585px;width:62px;letter-spacing:-0.16px;padding-right:2.84px;">4</div>
<div class="c" style="left:1648px;width:129px;letter-spacing:-0.28px;padding-left:4px;">Impagado</div>
</div>
<div class="row" style="top:161px;background:#ffc0cb">
<div class="c r" style="left:0px;width:59px;letter-spacing:-0.16px;padding-right:2.84px;">8</div>
<div class="gcb" style="left:73px"><svg width="13" height="13" viewBox="0 0 13 13"><path d="M2.3 6.6 L4.9 9.2 L10.6 3.5" fill="none" stroke="#333" stroke-width="2"/></svg></div>
<div class="c" style="left:100px;width:34px;text-align:center">A</div>
<div class="c" style="left:135px;width:104px;letter-spacing:-0.16px;padding-left:4px;">12020</div>
<div class="c r" style="left:240px;width:34px;letter-spacing:-0.16px;padding-right:2.84px;">1</div>
<div class="c" style="left:275px;width:94px;letter-spacing:0.1px;padding-left:5px;">25/03/2020</div>
<div class="c" style="left:370px;width:94px;letter-spacing:0.1px;padding-left:5px;">25/06/2020</div>
<div class="c r" style="left:465px;width:44px;letter-spacing:-0.16px;padding-right:2.84px;">92</div>
<div class="c r" style="left:510px;width:44px;letter-spacing:-0.16px;padding-right:2.84px;">-995</div>
<div class="gcb" style="left:561px"><svg width="13" height="13" viewBox="0 0 13 13"><path d="M2.3 6.6 L4.9 9.2 L10.6 3.5" fill="none" stroke="#333" stroke-width="2"/></svg></div>
<div class="gcb" style="left:586px"><svg width="13" height="13" viewBox="0 0 13 13"><path d="M2.3 6.6 L4.9 9.2 L10.6 3.5" fill="none" stroke="#333" stroke-width="2"/></svg></div>
<div class="c r" style="left:605px;width:79px;letter-spacing:-0.16px;padding-right:2.84px;">2917</div>
<div class="c" style="left:685px;width:349px;letter-spacing:0.277px;padding-left:4px;">MUÑOZ PASCUAL CARMEN</div>
<div class="c r" style="left:1035px;width:109px;letter-spacing:-0.16px;padding-right:2.84px;">162,82</div>
<div class="c r" style="left:1145px;width:109px;letter-spacing:-0.16px;padding-right:2.84px;">162,82</div>
<div class="c r" style="left:1255px;width:109px;letter-spacing:-0.16px;padding-right:2.84px;">0,00</div>
<div class="c r" style="left:1365px;width:109px;letter-spacing:-0.16px;padding-right:2.84px;">162,82</div>
<div class="c r" style="left:1475px;width:109px;letter-spacing:-0.16px;padding-right:2.84px;">0,00</div>
<div class="c r" style="left:1585px;width:62px;letter-spacing:-0.16px;padding-right:2.84px;">0</div>
<div class="c" style="left:1648px;width:129px;letter-spacing:-0.28px;padding-left:4px;">Negociable</div>
</div>
<div class="row" style="top:184px;background:#f0f0f0">
<div class="c r" style="left:0px;width:59px;letter-spacing:-0.16px;padding-right:2.84px;">9</div>
<div class="gcb" style="left:73px"><svg width="13" height="13" viewBox="0 0 13 13"><path d="M2.3 6.6 L4.9 9.2 L10.6 3.5" fill="none" stroke="#333" stroke-width="2"/></svg></div>
<div class="c" style="left:100px;width:34px;text-align:center">A</div>
<div class="c" style="left:135px;width:104px;letter-spacing:-0.16px;padding-left:4px;">12025</div>
<div class="c r" style="left:240px;width:34px;letter-spacing:-0.16px;padding-right:2.84px;">1</div>
<div class="c" style="left:275px;width:94px;letter-spacing:0.1px;padding-left:5px;">25/03/2020</div>
<div class="c" style="left:370px;width:94px;letter-spacing:0.1px;padding-left:5px;">25/06/2020</div>
<div class="c r" style="left:465px;width:44px;letter-spacing:-0.16px;padding-right:2.84px;">92</div>
<div class="c r" style="left:510px;width:44px;letter-spacing:-0.16px;padding-right:2.84px;">-995</div>
<div class="gcb" style="left:561px"><svg width="13" height="13" viewBox="0 0 13 13"><path d="M2.3 6.6 L4.9 9.2 L10.6 3.5" fill="none" stroke="#333" stroke-width="2"/></svg></div>
<div class="gcb" style="left:586px"><svg width="13" height="13" viewBox="0 0 13 13"><path d="M2.3 6.6 L4.9 9.2 L10.6 3.5" fill="none" stroke="#333" stroke-width="2"/></svg></div>
<div class="c r" style="left:605px;width:79px;letter-spacing:-0.16px;padding-right:2.84px;">2917</div>
<div class="c" style="left:685px;width:349px;letter-spacing:0.277px;padding-left:4px;">MUÑOZ PASCUAL CARMEN</div>
<div class="c r" style="left:1035px;width:109px;letter-spacing:-0.16px;padding-right:2.84px;">186,27</div>
<div class="c r" style="left:1145px;width:109px;letter-spacing:-0.16px;padding-right:2.84px;">186,27</div>
<div class="c r" style="left:1255px;width:109px;letter-spacing:-0.16px;padding-right:2.84px;">0,00</div>
<div class="c r" style="left:1365px;width:109px;letter-spacing:-0.16px;padding-right:2.84px;">186,27</div>
<div class="c r" style="left:1475px;width:109px;letter-spacing:-0.16px;padding-right:2.84px;">0,00</div>
<div class="c r" style="left:1585px;width:62px;letter-spacing:-0.16px;padding-right:2.84px;">0</div>
<div class="c" style="left:1648px;width:129px;letter-spacing:-0.28px;padding-left:4px;">Negociable</div>
</div>
<div class="row" style="top:207px;background:#ffc0cb">
<div class="c r" style="left:0px;width:59px;letter-spacing:-0.16px;padding-right:2.84px;">10</div>
<div class="gcb" style="left:73px"><svg width="13" height="13" viewBox="0 0 13 13"><path d="M2.3 6.6 L4.9 9.2 L10.6 3.5" fill="none" stroke="#333" stroke-width="2"/></svg></div>
<div class="c" style="left:100px;width:34px;text-align:center">A</div>
<div class="c" style="left:135px;width:104px;letter-spacing:-0.16px;padding-left:4px;">1210056</div>
<div class="c r" style="left:240px;width:34px;letter-spacing:-0.16px;padding-right:2.84px;">1</div>
<div class="c" style="left:275px;width:94px;letter-spacing:0.1px;padding-left:5px;">30/06/2021</div>
<div class="c" style="left:370px;width:94px;letter-spacing:0.1px;padding-left:5px;">30/09/2021</div>
<div class="c r" style="left:465px;width:44px;letter-spacing:-0.16px;padding-right:2.84px;">92</div>
<div class="c r" style="left:510px;width:44px;letter-spacing:-0.16px;padding-right:2.84px;">-533</div>
<div class="gcb" style="left:561px"><svg width="13" height="13" viewBox="0 0 13 13"><path d="M2.3 6.6 L4.9 9.2 L10.6 3.5" fill="none" stroke="#333" stroke-width="2"/></svg></div>
<div class="gcb" style="left:586px"><svg width="13" height="13" viewBox="0 0 13 13"><path d="M2.3 6.6 L4.9 9.2 L10.6 3.5" fill="none" stroke="#333" stroke-width="2"/></svg></div>
<div class="c r" style="left:605px;width:79px;letter-spacing:-0.16px;padding-right:2.84px;">228</div>
<div class="c" style="left:685px;width:349px;letter-spacing:0.343px;padding-left:4px;">TIENDAS EL TENDERO S.L.</div>
<div class="c r" style="left:1035px;width:109px;letter-spacing:-0.16px;padding-right:2.84px;">260,67</div>
<div class="c r" style="left:1145px;width:109px;letter-spacing:-0.16px;padding-right:2.84px;">260,67</div>
<div class="c r" style="left:1255px;width:109px;letter-spacing:-0.16px;padding-right:2.84px;">0,00</div>
<div class="c r" style="left:1365px;width:109px;letter-spacing:-0.16px;padding-right:2.84px;">260,67</div>
<div class="c r" style="left:1475px;width:109px;letter-spacing:-0.16px;padding-right:2.84px;">0,00</div>
<div class="c r" style="left:1585px;width:62px;letter-spacing:-0.16px;padding-right:2.84px;">0</div>
<div class="c" style="left:1648px;width:129px;letter-spacing:-0.28px;padding-left:4px;">Negociable</div>
</div>
<div class="row" style="top:230px;background:#f0f0f0">
<div class="c r" style="left:0px;width:59px;letter-spacing:-0.16px;padding-right:2.84px;">11</div>
<div class="gcb" style="left:73px"><svg width="13" height="13" viewBox="0 0 13 13"><path d="M2.3 6.6 L4.9 9.2 L10.6 3.5" fill="none" stroke="#333" stroke-width="2"/></svg></div>
<div class="c" style="left:100px;width:34px;text-align:center">A</div>
<div class="c" style="left:135px;width:104px;letter-spacing:-0.16px;padding-left:4px;">1210067</div>
<div class="c r" style="left:240px;width:34px;letter-spacing:-0.16px;padding-right:2.84px;">1</div>
<div class="c" style="left:275px;width:94px;letter-spacing:0.1px;padding-left:5px;">15/07/2021</div>
<div class="c" style="left:370px;width:94px;letter-spacing:0.1px;padding-left:5px;">15/10/2021</div>
<div class="c r" style="left:465px;width:44px;letter-spacing:-0.16px;padding-right:2.84px;">92</div>
<div class="c r" style="left:510px;width:44px;letter-spacing:-0.16px;padding-right:2.84px;">-518</div>
<div class="gcb" style="left:561px"><svg width="13" height="13" viewBox="0 0 13 13"><path d="M2.3 6.6 L4.9 9.2 L10.6 3.5" fill="none" stroke="#333" stroke-width="2"/></svg></div>
<div class="gcb" style="left:586px"><svg width="13" height="13" viewBox="0 0 13 13"><path d="M2.3 6.6 L4.9 9.2 L10.6 3.5" fill="none" stroke="#333" stroke-width="2"/></svg></div>
<div class="c r" style="left:605px;width:79px;letter-spacing:-0.16px;padding-right:2.84px;">228</div>
<div class="c" style="left:685px;width:349px;letter-spacing:0.343px;padding-left:4px;">TIENDAS EL TENDERO S.L.</div>
<div class="c r" style="left:1035px;width:109px;letter-spacing:-0.16px;padding-right:2.84px;">113,64</div>
<div class="c r" style="left:1145px;width:109px;letter-spacing:-0.16px;padding-right:2.84px;">113,64</div>
<div class="c r" style="left:1255px;width:109px;letter-spacing:-0.16px;padding-right:2.84px;">0,00</div>
<div class="c r" style="left:1365px;width:109px;letter-spacing:-0.16px;padding-right:2.84px;">113,64</div>
<div class="c r" style="left:1475px;width:109px;letter-spacing:-0.16px;padding-right:2.84px;">0,00</div>
<div class="c r" style="left:1585px;width:62px;letter-spacing:-0.16px;padding-right:2.84px;">0</div>
<div class="c" style="left:1648px;width:129px;letter-spacing:-0.28px;padding-left:4px;">Negociable</div>
</div>
<div class="row" style="top:253px;background:#ffc0cb">
<div class="c r" style="left:0px;width:59px;letter-spacing:-0.16px;padding-right:2.84px;">12</div>
<div class="gcb" style="left:73px"><svg width="13" height="13" viewBox="0 0 13 13"><path d="M2.3 6.6 L4.9 9.2 L10.6 3.5" fill="none" stroke="#333" stroke-width="2"/></svg></div>
<div class="c" style="left:100px;width:34px;text-align:center">A</div>
<div class="c" style="left:135px;width:104px;letter-spacing:-0.16px;padding-left:4px;">1210071</div>
<div class="c r" style="left:240px;width:34px;letter-spacing:-0.16px;padding-right:2.84px;">1</div>
<div class="c" style="left:275px;width:94px;letter-spacing:0.1px;padding-left:5px;">31/07/2021</div>
<div class="c" style="left:370px;width:94px;letter-spacing:0.1px;padding-left:5px;">30/10/2021</div>
<div class="c r" style="left:465px;width:44px;letter-spacing:-0.16px;padding-right:2.84px;">91</div>
<div class="c r" style="left:510px;width:44px;letter-spacing:-0.16px;padding-right:2.84px;">-503</div>
<div class="gcb" style="left:561px"><svg width="13" height="13" viewBox="0 0 13 13"><path d="M2.3 6.6 L4.9 9.2 L10.6 3.5" fill="none" stroke="#333" stroke-width="2"/></svg></div>
<div class="gcb" style="left:586px"><svg width="13" height="13" viewBox="0 0 13 13"><path d="M2.3 6.6 L4.9 9.2 L10.6 3.5" fill="none" stroke="#333" stroke-width="2"/></svg></div>
<div class="c r" style="left:605px;width:79px;letter-spacing:-0.16px;padding-right:2.84px;">56</div>
<div class="c" style="left:685px;width:349px;letter-spacing:0.292px;padding-left:4px;">FRUTAS HERMANOS BARRERO S.L.</div>
<div class="c r" style="left:1035px;width:109px;letter-spacing:-0.16px;padding-right:2.84px;">44,72</div>
<div class="c r" style="left:1145px;width:109px;letter-spacing:-0.16px;padding-right:2.84px;">44,72</div>
<div class="c r" style="left:1255px;width:109px;letter-spacing:-0.16px;padding-right:2.84px;">0,00</div>
<div class="c r" style="left:1365px;width:109px;letter-spacing:-0.16px;padding-right:2.84px;">44,72</div>
<div class="c r" style="left:1475px;width:109px;letter-spacing:-0.16px;padding-right:2.84px;">0,00</div>
<div class="c r" style="left:1585px;width:62px;letter-spacing:-0.16px;padding-right:2.84px;">0</div>
<div class="c" style="left:1648px;width:129px;letter-spacing:-0.28px;padding-left:4px;">Negociable</div>
</div>
<div class="row" style="top:276px;background:#f0f0f0">
<div class="c r" style="left:0px;width:59px;letter-spacing:-0.16px;padding-right:2.84px;">13</div>
<div class="gcb" style="left:73px"><svg width="13" height="13" viewBox="0 0 13 13"><path d="M2.3 6.6 L4.9 9.2 L10.6 3.5" fill="none" stroke="#333" stroke-width="2"/></svg></div>
<div class="c" style="left:100px;width:34px;text-align:center">A</div>
<div class="c" style="left:135px;width:104px;letter-spacing:-0.16px;padding-left:4px;">1210072</div>
<div class="c r" style="left:240px;width:34px;letter-spacing:-0.16px;padding-right:2.84px;">1</div>
<div class="c" style="left:275px;width:94px;letter-spacing:0.1px;padding-left:5px;">31/07/2021</div>
<div class="c" style="left:370px;width:94px;letter-spacing:0.1px;padding-left:5px;">30/10/2021</div>
<div class="c r" style="left:465px;width:44px;letter-spacing:-0.16px;padding-right:2.84px;">91</div>
<div class="c r" style="left:510px;width:44px;letter-spacing:-0.16px;padding-right:2.84px;">-503</div>
<div class="gcb" style="left:561px"><svg width="13" height="13" viewBox="0 0 13 13"><path d="M2.3 6.6 L4.9 9.2 L10.6 3.5" fill="none" stroke="#333" stroke-width="2"/></svg></div>
<div class="gcb" style="left:586px"><svg width="13" height="13" viewBox="0 0 13 13"><path d="M2.3 6.6 L4.9 9.2 L10.6 3.5" fill="none" stroke="#333" stroke-width="2"/></svg></div>
<div class="c r" style="left:605px;width:79px;letter-spacing:-0.16px;padding-right:2.84px;">205</div>
<div class="c" style="left:685px;width:349px;letter-spacing:0.384px;padding-left:4px;">FRUTAS ROSI 11 S.L.</div>
<div class="c r" style="left:1035px;width:109px;letter-spacing:-0.16px;padding-right:2.84px;">301,59</div>
<div class="c r" style="left:1145px;width:109px;letter-spacing:-0.16px;padding-right:2.84px;">301,59</div>
<div class="c r" style="left:1255px;width:109px;letter-spacing:-0.16px;padding-right:2.84px;">0,00</div>
<div class="c r" style="left:1365px;width:109px;letter-spacing:-0.16px;padding-right:2.84px;">301,59</div>
<div class="c r" style="left:1475px;width:109px;letter-spacing:-0.16px;padding-right:2.84px;">0,00</div>
<div class="c r" style="left:1585px;width:62px;letter-spacing:-0.16px;padding-right:2.84px;">0</div>
<div class="c" style="left:1648px;width:129px;letter-spacing:-0.28px;padding-left:4px;">Negociable</div>
</div>
<div class="row" style="top:299px;background:#ffc0cb">
<div class="c r" style="left:0px;width:59px;letter-spacing:-0.16px;padding-right:2.84px;">14</div>
<div class="gcb" style="left:73px"><svg width="13" height="13" viewBox="0 0 13 13"><path d="M2.3 6.6 L4.9 9.2 L10.6 3.5" fill="none" stroke="#333" stroke-width="2"/></svg></div>
<div class="c" style="left:100px;width:34px;text-align:center">A</div>
<div class="c" style="left:135px;width:104px;letter-spacing:-0.16px;padding-left:4px;">1210075</div>
<div class="c r" style="left:240px;width:34px;letter-spacing:-0.16px;padding-right:2.84px;">1</div>
<div class="c" style="left:275px;width:94px;letter-spacing:0.1px;padding-left:5px;">31/07/2021</div>
<div class="c" style="left:370px;width:94px;letter-spacing:0.1px;padding-left:5px;">30/10/2021</div>
<div class="c r" style="left:465px;width:44px;letter-spacing:-0.16px;padding-right:2.84px;">91</div>
<div class="c r" style="left:510px;width:44px;letter-spacing:-0.16px;padding-right:2.84px;">-503</div>
<div class="gcb" style="left:561px"><svg width="13" height="13" viewBox="0 0 13 13"><path d="M2.3 6.6 L4.9 9.2 L10.6 3.5" fill="none" stroke="#333" stroke-width="2"/></svg></div>
<div class="gcb" style="left:586px"><svg width="13" height="13" viewBox="0 0 13 13"><path d="M2.3 6.6 L4.9 9.2 L10.6 3.5" fill="none" stroke="#333" stroke-width="2"/></svg></div>
<div class="c r" style="left:605px;width:79px;letter-spacing:-0.16px;padding-right:2.84px;">2835</div>
<div class="c" style="left:685px;width:349px;letter-spacing:0.453px;padding-left:4px;">RAMON BONAFRUTA S.L.U</div>
<div class="c r" style="left:1035px;width:109px;letter-spacing:-0.16px;padding-right:2.84px;">15,43</div>
<div class="c r" style="left:1145px;width:109px;letter-spacing:-0.16px;padding-right:2.84px;">15,43</div>
<div class="c r" style="left:1255px;width:109px;letter-spacing:-0.16px;padding-right:2.84px;">0,00</div>
<div class="c r" style="left:1365px;width:109px;letter-spacing:-0.16px;padding-right:2.84px;">15,43</div>
<div class="c r" style="left:1475px;width:109px;letter-spacing:-0.16px;padding-right:2.84px;">0,00</div>
<div class="c r" style="left:1585px;width:62px;letter-spacing:-0.16px;padding-right:2.84px;">0</div>
<div class="c" style="left:1648px;width:129px;letter-spacing:-0.28px;padding-left:4px;">Negociable</div>
</div>
<div class="row" style="top:322px;background:#f0f0f0">
<div class="c r" style="left:0px;width:59px;letter-spacing:-0.16px;padding-right:2.84px;">15</div>
<div class="gcb" style="left:73px"><svg width="13" height="13" viewBox="0 0 13 13"><path d="M2.3 6.6 L4.9 9.2 L10.6 3.5" fill="none" stroke="#333" stroke-width="2"/></svg></div>
<div class="c" style="left:100px;width:34px;text-align:center">A</div>
<div class="c" style="left:135px;width:104px;letter-spacing:-0.16px;padding-left:4px;">1210078</div>
<div class="c r" style="left:240px;width:34px;letter-spacing:-0.16px;padding-right:2.84px;">1</div>
<div class="c" style="left:275px;width:94px;letter-spacing:0.1px;padding-left:5px;">31/07/2021</div>
<div class="c" style="left:370px;width:94px;letter-spacing:0.1px;padding-left:5px;">30/10/2021</div>
<div class="c r" style="left:465px;width:44px;letter-spacing:-0.16px;padding-right:2.84px;">91</div>
<div class="c r" style="left:510px;width:44px;letter-spacing:-0.16px;padding-right:2.84px;">-503</div>
<div class="gcb" style="left:561px"><svg width="13" height="13" viewBox="0 0 13 13"><path d="M2.3 6.6 L4.9 9.2 L10.6 3.5" fill="none" stroke="#333" stroke-width="2"/></svg></div>
<div class="gcb" style="left:586px"><svg width="13" height="13" viewBox="0 0 13 13"><path d="M2.3 6.6 L4.9 9.2 L10.6 3.5" fill="none" stroke="#333" stroke-width="2"/></svg></div>
<div class="c r" style="left:605px;width:79px;letter-spacing:-0.16px;padding-right:2.84px;">3957</div>
<div class="c" style="left:685px;width:349px;letter-spacing:0.4px;padding-left:4px;">PALACIOS ROCA S.A.</div>
<div class="c r" style="left:1035px;width:109px;letter-spacing:-0.16px;padding-right:2.84px;">6.521,38</div>
<div class="c r" style="left:1145px;width:109px;letter-spacing:-0.16px;padding-right:2.84px;">6.521,38</div>
<div class="c r" style="left:1255px;width:109px;letter-spacing:-0.16px;padding-right:2.84px;">0,00</div>
<div class="c r" style="left:1365px;width:109px;letter-spacing:-0.16px;padding-right:2.84px;">6.521,38</div>
<div class="c r" style="left:1475px;width:109px;letter-spacing:-0.16px;padding-right:2.84px;">0,00</div>
<div class="c r" style="left:1585px;width:62px;letter-spacing:-0.16px;padding-right:2.84px;">0</div>
<div class="c" style="left:1648px;width:129px;letter-spacing:-0.28px;padding-left:4px;">Negociable</div>
</div>
<div class="vl" style="left:76px;top:0;height:331px;background:#d6d6d6"></div>
<div class="vl" style="left:116px;top:0;height:331px;background:#d6d6d6"></div>
<div class="vl" style="left:151px;top:0;height:331px;background:#d6d6d6"></div>
<div class="vl" style="left:256px;top:0;height:331px;background:#d6d6d6"></div>
<div class="vl" style="left:291px;top:0;height:331px;background:#d6d6d6"></div>
<div class="vl" style="left:386px;top:0;height:331px;background:#d6d6d6"></div>
<div class="vl" style="left:481px;top:0;height:331px;background:#d6d6d6"></div>
<div class="vl" style="left:526px;top:0;height:331px;background:#d6d6d6"></div>
<div class="vl" style="left:571px;top:0;height:331px;background:#d6d6d6"></div>
<div class="vl" style="left:596px;top:0;height:331px;background:#d6d6d6"></div>
<div class="vl" style="left:621px;top:0;height:331px;background:#d6d6d6"></div>
<div class="vl" style="left:701px;top:0;height:331px;background:#d6d6d6"></div>
<div class="vl" style="left:1051px;top:0;height:331px;background:#d6d6d6"></div>
<div class="vl" style="left:1161px;top:0;height:331px;background:#d6d6d6"></div>
<div class="vl" style="left:1271px;top:0;height:331px;background:#d6d6d6"></div>
<div class="vl" style="left:1381px;top:0;height:331px;background:#d6d6d6"></div>
<div class="vl" style="left:1491px;top:0;height:331px;background:#d6d6d6"></div>
<div class="vl" style="left:1601px;top:0;height:331px;background:#d6d6d6"></div>
<div class="vl" style="left:1664px;top:0;height:331px;background:#d6d6d6"></div>
<div class="hl" style="left:17px;top:22px;width:1760px;background:#dadada"></div>
<div class="hl" style="left:17px;top:45px;width:1760px;background:#dadada"></div>
<div class="hl" style="left:17px;top:68px;width:1760px;background:#dadada"></div>
<div class="hl" style="left:17px;top:91px;width:1760px;background:#dadada"></div>
<div class="hl" style="left:17px;top:114px;width:1760px;background:#dadada"></div>
<div class="hl" style="left:17px;top:137px;width:1760px;background:#dadada"></div>
<div class="hl" style="left:17px;top:160px;width:1760px;background:#dadada"></div>
<div class="hl" style="left:17px;top:183px;width:1760px;background:#dadada"></div>
<div class="hl" style="left:17px;top:206px;width:1760px;background:#dadada"></div>
<div class="hl" style="left:17px;top:229px;width:1760px;background:#dadada"></div>
<div class="hl" style="left:17px;top:252px;width:1760px;background:#dadada"></div>
<div class="hl" style="left:17px;top:275px;width:1760px;background:#dadada"></div>
<div class="hl" style="left:17px;top:298px;width:1760px;background:#dadada"></div>
<div class="hl" style="left:17px;top:321px;width:1760px;background:#dadada"></div>
<div class="hl" style="left:17px;top:344px;width:1760px;background:#dadada"></div>
<svg style="position:absolute;left:6px;top:7px" width="6" height="9" viewBox="0 0 6 9"><path d="M0.5 0.5 L5 4.5 L0.5 8.5 Z" fill="#555"/></svg>
</div>
<div class="hl" style="left:40px;top:632px;width:1794px"></div>
<div style="position:absolute;left:1817px;top:301px;width:17px;height:331px;background:#f0f0f0"></div>
<div style="position:absolute;left:1817px;top:318px;width:17px;height:17px;background:#cdcdcd"></div>
<svg style="position:absolute;left:1821px;top:305px" width="9" height="7" viewBox="0 0 9 7"><path d="M1 5.5 L4.5 2 L8 5.5" fill="none" stroke="#606060" stroke-width="1.6"/></svg>
<svg style="position:absolute;left:1821px;top:620px" width="9" height="7" viewBox="0 0 9 7"><path d="M1 1.5 L4.5 5 L8 1.5" fill="none" stroke="#606060" stroke-width="1.6"/></svg>
<div class="ft" style="left:193px;width:103px;padding-right:3px">1.565</div>
<div class="ft" style="left:523px;width:43px;padding-right:3px">88</div>
<div class="ft" style="left:568px;width:43px;padding-right:3px">-5...</div>
<div class="ft" style="left:1093px;width:108px;padding-right:3px">443.380,99</div>
<div class="ft" style="left:1203px;width:108px;padding-right:3px">428.681,50</div>
<div class="ft" style="left:1313px;width:108px;padding-right:3px">14.699,49</div>
<div class="ft" style="left:1423px;width:108px;padding-right:3px">428.681,50</div>
<div class="ft" style="left:1533px;width:108px;padding-right:3px">0,00</div>
</body></html>
